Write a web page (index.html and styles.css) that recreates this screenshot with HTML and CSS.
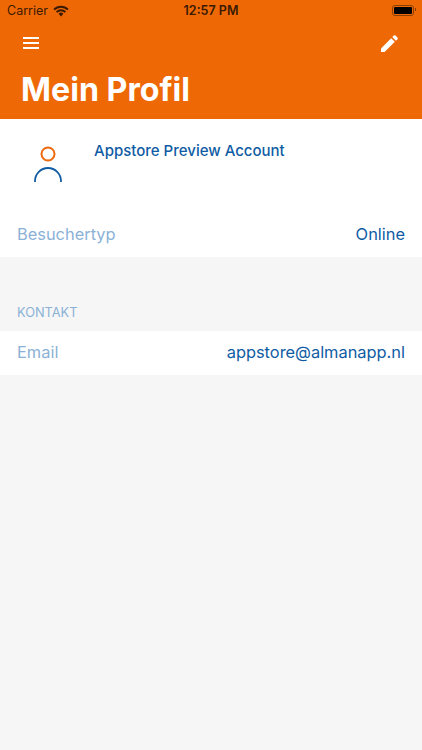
FILE: index.html
```html
<!DOCTYPE html>
<html lang="en">
<head>
    <meta charset="UTF-8">
    <meta name="viewport" content="width=device-width, initial-scale=1.0">
    <title>Mein Profil</title>
    <link rel="stylesheet" href="styles.css">
</head>
<body>
    <header class="header">
        <div class="status-bar">
            <div class="status-left">
                <span class="carrier">Carrier</span>
                <svg class="wifi" width="16" height="12" viewBox="0 0 16 12">
                    <path d="M8 11.500 5.600 8.800a3.400 3.400 0 0 1 4.800 0z" fill="#3a1a00"/>
                    <path d="M1.100 4.600a9.800 9.800 0 0 1 13.800 0" fill="none" stroke="#3a1a00" stroke-width="2"/>
                    <path d="M3.600 7.100a6.200 6.200 0 0 1 8.800 0" fill="none" stroke="#3a1a00" stroke-width="2"/>
                </svg>
            </div>
            <span class="clock">12:57 PM</span>
            <div class="battery"><div class="battery-fill"></div></div>
        </div>
        <div class="toolbar">
            <svg width="16" height="12" viewBox="0 0 16 12">
                <path d="M0 1h16M0 6h16M0 11h16" stroke="#fff" stroke-width="2"/>
            </svg>
            <svg width="17" height="17" viewBox="0 0 18 18">
                <path d="M0 18v-3.800L10.800 3.400l3.800 3.800L3.800 18z" fill="#fff"/>
                <path d="M12 2.200 13.600.6a1.300 1.300 0 0 1 1.800 0l2 2a1.300 1.300 0 0 1 0 1.800L15.800 6z" fill="#fff"/>
            </svg>
        </div>
        <h1 class="title">Mein Profil</h1>
    </header>

    <section class="card">
        <div class="profile-row">
            <svg class="avatar" width="30" height="38" viewBox="0 0 30 38">
                <circle cx="15" cy="8" r="6.500" fill="none" stroke="#ee6a0c" stroke-width="2"/>
                <path d="M2 36v-1a13 13 0 0 1 26 0v1" fill="none" stroke="#0f5ca4" stroke-width="1.800"/>
            </svg>
            <span class="profile-name">Appstore Preview Account</span>
        </div>
        <div class="row">
            <span class="row-label">Besuchertyp</span>
            <span class="row-value">Online</span>
        </div>
    </section>

    <div class="section-title">KONTAKT</div>

    <section class="card">
        <div class="row">
            <span class="row-label">Email</span>
            <span class="row-value">appstore@almanapp.nl</span>
        </div>
    </section>
</body>
</html>
```

FILE: styles.css
```css
body {
    margin: 0;
    min-height: 750px;
    font-family: Inter, "Liberation Sans", sans-serif;
    background-color: #f6f6f6;
}

.header {
    height: 119px;
    padding: 0 21px;
    box-sizing: border-box;
    background-color: #ee6906;
}

.status-bar {
    display: grid;
    grid-template-columns: 1fr auto 1fr;
    align-items: center;
    height: 21px;
    margin: 0 -14px;
    font-size: 12.5px;
    color: #3a1a00;
}

.status-left {
    display: flex;
    align-items: center;
    gap: 5px;
}

.clock {
    font-weight: 600;
}

.battery {
    position: relative;
    justify-self: end;
    width: 18px;
    height: 7px;
    margin-right: 1px;
    padding: 1px;
    border: 1px solid #8a4003;
    border-radius: 3px;
}

.battery::after {
    content: "";
    position: absolute;
    top: 2px;
    right: -3px;
    width: 1px;
    height: 3px;
    background-color: #8a4003;
}

.battery-fill {
    height: 100%;
    border-radius: 1px;
    background-color: #000;
}

.toolbar {
    display: flex;
    justify-content: space-between;
    align-items: center;
    height: 24px;
    margin-top: 10px;
    padding: 0 3px 0 2px;
}

.title {
    margin: 15px 0 0;
    font-size: 32.2px;
    line-height: 40px;
    font-weight: 700;
    color: #fff;
}

.card {
    background-color: #fff;
}

.profile-row {
    display: flex;
    height: 94px;
    padding: 0 17px 0 33px;
}

.avatar {
    margin-top: 27px;
}

.profile-name {
    margin: 23px 0 0 31px;
    font-size: 15px;
    line-height: 18px;
    font-weight: 500;
    color: #0f5ca4;
}

.row {
    display: flex;
    justify-content: space-between;
    align-items: center;
    height: 42px;
    padding: 0 17px 2px;
    font-size: 16.4px;
}

.row-label {
    color: #8bb1d6;
}

.row-value {
    color: #0f5ca4;
}

.section-title {
    height: 29px;
    margin-top: 45px;
    padding: 0 17px;
    font-size: 12.8px;
    line-height: 21px;
    color: #8bb1d6;
}
```
